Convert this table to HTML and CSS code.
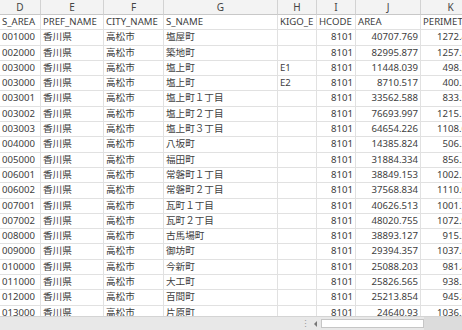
FILE: index.html
```html
<!DOCTYPE html>
<html lang="ja">
<head>
    <meta charset="UTF-8">
    <meta name="viewport" content="width=device-width, initial-scale=1.0">
    <title>小地域データ</title>
    <link rel="stylesheet" href="styles.css">
</head>
<body>
    <div class="sheet">
        <div class="row head">
            <div class="cell">D</div>
            <div class="cell">E</div>
            <div class="cell">F</div>
            <div class="cell">G</div>
            <div class="cell">H</div>
            <div class="cell">I</div>
            <div class="cell">J</div>
            <div class="cell">K</div>
        </div>
        <div id="rows"></div>
    </div>

    <div class="statusbar">
        <div class="sheet-tabs"></div>
        <div class="grip">⋮</div>
        <div class="scroll-left"></div>
        <div class="scroll-thumb"></div>
        <div class="scroll-track"></div>
    </div>

    <script>
        // フィールド名とデータ
        var fields = ['S_AREA', 'PREF_NAME', 'CITY_NAME', 'S_NAME', 'KIGO_E', 'HCODE', 'AREA', 'PERIMETER'];
        var data = [
            ['001000', '塩屋町', '', '40707.769', '1272.431'],
            ['002000', '築地町', '', '82995.877', '1257.902'],
            ['003000', '塩上町', 'E1', '11448.039', '498.215'],
            ['003000', '塩上町', 'E2', '8710.517', '400.386'],
            ['003001', '塩上町１丁目', '', '33562.588', '833.547'],
            ['003002', '塩上町２丁目', '', '76693.997', '1215.120'],
            ['003003', '塩上町３丁目', '', '64654.226', '1108.673'],
            ['004000', '八坂町', '', '14385.824', '506.391'],
            ['005000', '福田町', '', '31884.334', '856.248'],
            ['006001', '常磐町１丁目', '', '38849.153', '1002.517'],
            ['006002', '常磐町２丁目', '', '37568.834', '1110.062'],
            ['007001', '瓦町１丁目', '', '40626.513', '1001.734'],
            ['007002', '瓦町２丁目', '', '48020.755', '1072.905'],
            ['008000', '古馬場町', '', '38893.127', '915.382'],
            ['009000', '御坊町', '', '29394.357', '1037.610'],
            ['010000', '今新町', '', '25088.203', '981.457'],
            ['011000', '大工町', '', '25826.565', '938.214'],
            ['012000', '百間町', '', '25213.854', '945.873'],
            ['013000', '片原町', '', '24640.93', '1036.528']
        ];

        function cell(text, cls) {
            return '<div class="cell' + (cls ? ' ' + cls : '') + '">' + text + '</div>';
        }

        var html = '<div class="row">';
        fields.forEach(function (f) { html += cell(f); });
        html += '</div>';

        data.forEach(function (d) {
            html += '<div class="row">'
                + cell(d[0]) + cell('香川県') + cell('高松市') + cell(d[1]) + cell(d[2])
                + cell('8101', 'num') + cell(d[3], 'num') + cell(d[4], 'num')
                + '</div>';
        });

        document.getElementById('rows').innerHTML = html;
    </script>
</body>
</html>
```

FILE: styles.css
```css
html, body {
    margin: 0;
    height: 100%;
    overflow: hidden;
}
body {
    font-family: 'Noto Sans', 'Noto Sans CJK JP', sans-serif;
    font-size: 9.6px;
    color: #404040;
    background: #fff;
    display: flex;
    flex-direction: column;
}
.sheet {
    flex: 1;
    overflow: hidden;
}
.row {
    display: grid;
    grid-template-columns: 41px 63px 60px 114px 39px 39px 65px 60px;
    height: 15.3px;
    width: 481px;
}
.cell {
    box-sizing: border-box;
    border-right: 1px solid #e1e1e1;
    border-bottom: 1px solid #e1e1e1;
    padding: 0 2px;
    line-height: 14px;
    white-space: nowrap;
    overflow: hidden;
}
.cell.num {
    text-align: right;
}
.row.head {
    height: 15px;
    background: #f3f3f3;
    color: #444;
    font-size: 10px;
}
.row.head .cell {
    text-align: center;
    border-right-color: #d2d2d2;
    border-bottom-color: #c8c8c8;
}
.statusbar {
    height: 14px;
    flex-shrink: 0;
    display: flex;
    align-items: center;
    background: #e8e8e8;
    border-top: 1px solid #d4d4d4;
    box-sizing: border-box;
}
.sheet-tabs {
    width: 300px;
}
.grip {
    width: 10px;
    color: #999;
    font-size: 9px;
    text-align: center;
    line-height: 12px;
}
.scroll-left {
    width: 0;
    height: 0;
    margin: 0 4px 0 4px;
    border-top: 3px solid transparent;
    border-bottom: 3px solid transparent;
    border-right: 3px solid #777;
}
.scroll-thumb {
    width: 103px;
    height: 9px;
    background: #fff;
    border: 1px solid #c6c6c6;
    box-sizing: border-box;
}
.scroll-track {
    flex: 1;
    height: 13px;
    background: #dcdcdc;
}
```
